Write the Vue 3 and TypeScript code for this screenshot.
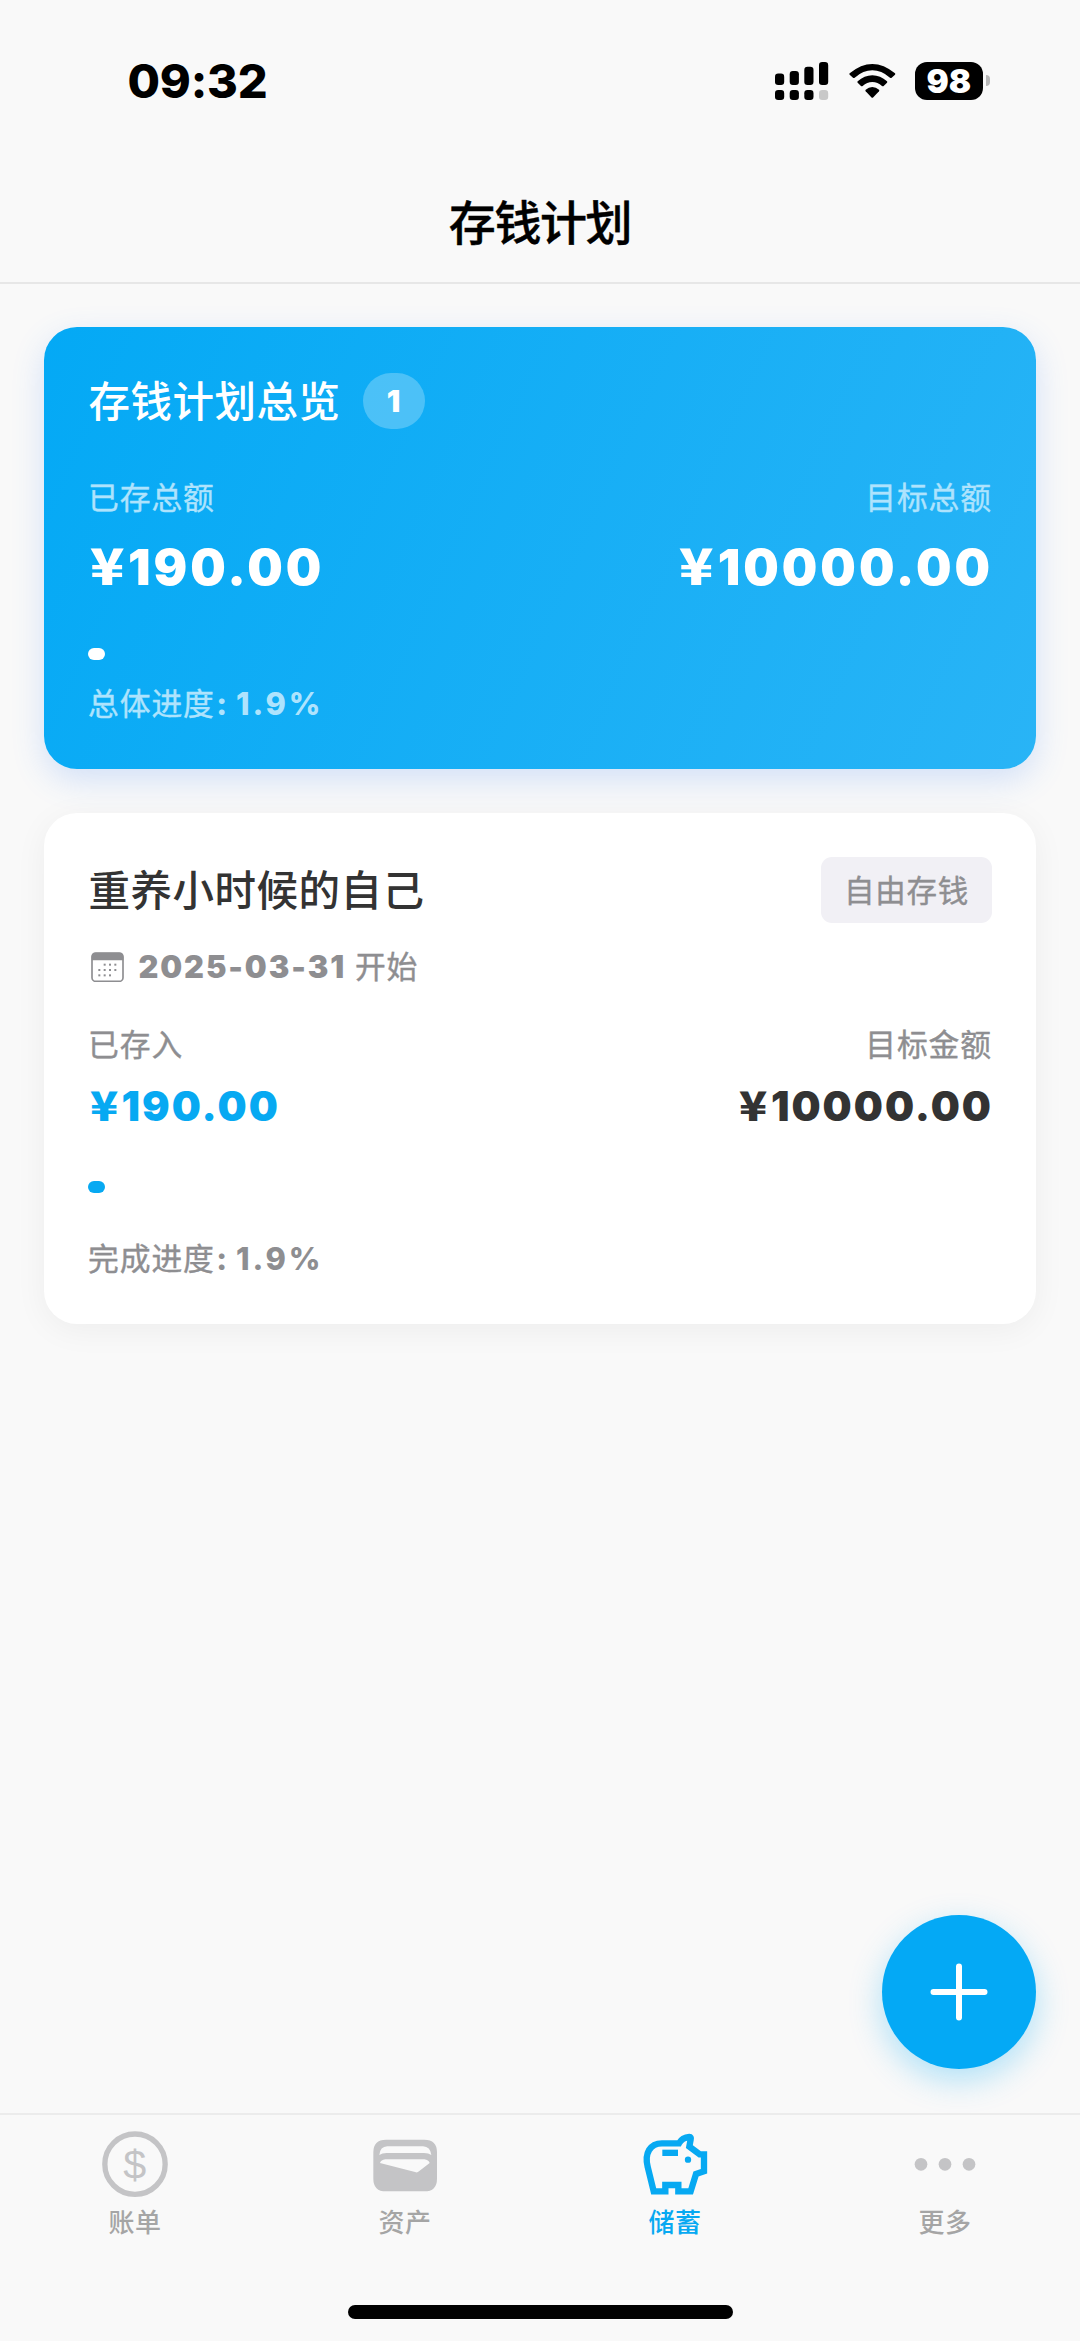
<script setup lang="ts">
interface Plan {
  name: string
  mode: string
  start: string
  saved: number
  target: number
}

const plans: Plan[] = [
  { name: '重养小时候的自己', mode: '自由存钱', start: '2025-03-31', saved: 190, target: 10000 },
]

const tabs = [
  { key: 'bill', label: '账单' },
  { key: 'asset', label: '资产' },
  { key: 'saving', label: '储蓄' },
  { key: 'more', label: '更多' },
]
const activeTab = 'saving'

const totalSaved = plans.reduce((sum, p) => sum + p.saved, 0)
const totalTarget = plans.reduce((sum, p) => sum + p.target, 0)

const amount = (n: number) => n.toFixed(2)
const percent = (a: number, b: number) => ((a / b) * 100).toFixed(1) + '%'
</script>

<template>
  <div class="screen">
    <header class="top">
      <div class="status">
        <span class="clock">09:32</span>
        <div class="indicators">
          <svg class="signal" viewBox="0 0 54 38" width="54" height="38">
            <rect x="0" y="11.6" width="9.2" height="11.4" rx="3.2" />
            <rect x="14.7" y="9" width="9.2" height="14" rx="3.2" />
            <rect x="29.3" y="4.8" width="9.2" height="18.2" rx="3.2" />
            <rect x="44" y="0" width="9.2" height="23" rx="3.2" />
            <rect x="0" y="28" width="9.2" height="10" rx="3.2" />
            <rect x="14.7" y="28" width="9.2" height="10" rx="3.2" />
            <rect x="29.3" y="28" width="9.2" height="10" rx="3.2" />
            <rect x="44" y="28" width="9.2" height="10" rx="3.2" fill="#c8c8c8" />
          </svg>
          <svg class="wifi" viewBox="295 66 141 108" width="47" height="36">
            <path d="M297 97Q331 69 365 69T433 97Q435 99 433 101L423 110Q421 112 418 110Q392 88 365 88T312 110Q309 112 307 110L297 101Q295 99 297 97Z" />
            <path d="M321 121Q341 103 365 103T409 121Q411 123 409 125L399 135Q397 137 394 135Q381 123 365 123T336 135Q333 137 331 135L321 125Q319 123 321 121Z" />
            <path d="M345 146Q354 138 365 138T385 146Q387 148 385 151L368 169Q365 172 362 169L345 151Q343 148 345 146Z" />
          </svg>
          <div class="battery"><span class="level">98</span></div>
          <span class="nub"></span>
        </div>
      </div>
      <h1 class="nav-title">存钱计划</h1>
    </header>

    <main class="content">
      <section class="card overview">
        <div class="head">
          <h2 class="title">存钱计划总览</h2>
          <span class="count">{{ plans.length }}</span>
        </div>
        <div class="pair labels">
          <span>已存总额</span><span>目标总额</span>
        </div>
        <div class="pair sums">
          <span><i class="yen">¥</i>{{ amount(totalSaved) }}</span>
          <span class="goal"><i class="yen">¥</i>{{ amount(totalTarget) }}</span>
        </div>
        <div class="track"><div class="fill" :style="{ width: percent(totalSaved, totalTarget) }"></div></div>
        <p class="progress">总体进度<b>: {{ percent(totalSaved, totalTarget) }}</b></p>
      </section>

      <section v-for="p in plans" :key="p.name" class="card plan">
        <div class="head">
          <h2 class="title">{{ p.name }}</h2>
          <span class="tag">{{ p.mode }}</span>
        </div>
        <div class="date">
          <svg viewBox="182 1053 99 92" width="33" height="30.7">
            <rect x="185" y="1056" width="93" height="85" rx="11" fill="none" stroke="#8e8e91" stroke-width="5" />
            <path d="M184 1078V1068Q184 1055 197 1055H266Q279 1055 279 1068V1078Z" fill="#8e8e91" />
            <g fill="#8e8e91">
              <rect x="220" y="1088" width="6" height="6" /><rect x="236" y="1088" width="6" height="6" /><rect x="252" y="1088" width="6" height="6" />
              <rect x="204" y="1104" width="6" height="6" /><rect x="220" y="1104" width="6" height="6" /><rect x="236" y="1104" width="6" height="6" /><rect x="252" y="1104" width="6" height="6" />
              <rect x="204" y="1120" width="6" height="6" /><rect x="220" y="1120" width="6" height="6" /><rect x="236" y="1120" width="6" height="6" />
            </g>
          </svg>
          <b>{{ p.start }}</b><span>开始</span>
        </div>
        <div class="pair labels">
          <span>已存入</span><span>目标金额</span>
        </div>
        <div class="pair sums">
          <span class="saved"><i class="yen">¥</i>{{ amount(p.saved) }}</span>
          <span class="goal"><i class="yen">¥</i>{{ amount(p.target) }}</span>
        </div>
        <div class="track"><div class="fill" :style="{ width: percent(p.saved, p.target) }"></div></div>
        <p class="progress">完成进度<b>: {{ percent(p.saved, p.target) }}</b></p>
      </section>
    </main>

    <button class="fab" aria-label="add">
      <svg viewBox="0 0 60 60" width="60" height="60">
        <path d="M30 4.5V55.5M4.5 30H55.5" stroke="#fff" stroke-width="6" stroke-linecap="round" />
      </svg>
    </button>

    <nav class="tabs">
      <div v-for="t in tabs" :key="t.key" class="tab" :class="{ active: t.key === activeTab }">
        <svg v-if="t.key === 'bill'" viewBox="117 82 216 216">
          <circle cx="225" cy="190.500" r="90.500" fill="none" stroke="#c4c4c6" stroke-width="16" />
          <text x="224" y="236" text-anchor="middle" class="dollar">$</text>
        </svg>
        <svg v-else-if="t.key === 'asset'" viewBox="927 82 216 216">
          <path
            fill="#c4c4c6" fill-rule="evenodd"
            d="M978 117H1093Q1131 117 1131 155V234Q1131 272 1093 272H978Q940 272 940 234V155Q940 117 978 117ZM982 137Q960 138 958 163Q966 157 980 157H1092Q1106 157 1114 163Q1111 138 1089 137ZM976 176Q963 178 960 187L1068 215Q1073 216 1077 212L1109 187Q1106 178 1093 176Z"
          />
        </svg>
        <svg v-else-if="t.key === 'saving'" viewBox="117 82 216 216">
          <path
            fill="none" stroke="#07a9f2" stroke-width="19"
            d="M161 272L143 198C133 158 150 128 186 128H237Q247 110 268 109Q274 109 272 116L268 138L299 161H312V212L288 220L272 272H235V253H196V272Z"
          />
          <rect x="187" y="147" width="47" height="19" fill="#07a9f2" />
          <circle cx="264" cy="177" r="9.500" fill="#07a9f2" />
        </svg>
        <svg v-else viewBox="927 82 216 216" fill="#c4c4c6">
          <circle cx="963" cy="191" r="19" /><circle cx="1035" cy="191" r="19" /><circle cx="1107" cy="191" r="19" />
        </svg>
        <span class="tab-label">{{ t.label }}</span>
      </div>
      <div class="home"></div>
    </nav>
  </div>
</template>

<style>
body {
  margin: 0;
  background: #f9f9f9;
}
</style>

<style scoped>
.screen {
  position: relative;
  display: flex;
  flex-direction: column;
  width: 1080px;
  height: 2341px;
  overflow: hidden;
  background: #f9f9f9;
  color: #333;
  font-family: Inter, "Noto Sans CJK SC", sans-serif;
}

.top {
  box-sizing: border-box;
  height: 284px;
  border-bottom: 2px solid #e7e7e7;
}

.status {
  display: flex;
  justify-content: space-between;
  height: 161px;
  padding: 0 90px 0 127.5px;
  align-items: center;
  box-sizing: border-box;
}

.clock {
  font-size: 47px;
  line-height: 60px;
  font-weight: 800;
  letter-spacing: -0.2px;
  color: #000;
}

.indicators {
  display: flex;
  align-items: center;
}

.wifi {
  margin: 0 19px 0 20px;
}

.battery {
  display: flex;
  align-items: center;
  justify-content: center;
  width: 68.5px;
  height: 38px;
  border-radius: 12px;
  background: #000;
}

.level {
  color: #fff;
  font-size: 33px;
  line-height: 38px;
  font-weight: 900;
}

.nub {
  width: 4px;
  height: 11px;
  margin-left: 3px;
  border-radius: 0 4px 4px 0;
  background: #b8b8b8;
}

.nav-title {
  margin: 32px 0 0;
  text-align: center;
  font-size: 47px;
  line-height: 60px;
  font-weight: 500;
  letter-spacing: -1.4px;
  color: #000;
  -webkit-text-stroke: 0.4px #000;
}

.content {
  display: flex;
  flex-direction: column;
  gap: 44px;
  padding: 43px 44px 0;
}

.card {
  box-sizing: border-box;
  padding: 0 44px;
  border-radius: 33px;
}

.overview {
  height: 442px;
  padding-top: 46px;
  color: #fff;
  background: linear-gradient(114deg, #04a9f5, #29b4f6);
  box-shadow: 0 11px 33px rgba(60, 130, 246, 0.2);
}

.plan {
  height: 511px;
  padding-top: 44px;
  background: #fff;
  box-shadow: 0 6px 33px rgba(0, 0, 0, 0.05);
}

.head {
  display: flex;
  align-items: center;
  height: 56px;
}

.plan .head {
  height: 66px;
  justify-content: space-between;
}

.title {
  margin: 1px 0 0 0.5px;
  font-size: 41.5px;
  line-height: 56px;
  font-weight: 500;
  letter-spacing: 0.5px;
}

.count {
  width: 62px;
  height: 56px;
  margin-left: 22px;
  border-radius: 28px;
  background: rgba(255, 255, 255, 0.25);
  text-align: center;
  font-size: 30px;
  line-height: 56px;
  font-weight: 900;
}

.tag {
  width: 171px;
  height: 66px;
  border-radius: 11px;
  background: #f1f0f5;
  color: #8e8e91;
  text-align: center;
  font-size: 30.5px;
  line-height: 68px;
  letter-spacing: 0.7px;
  -webkit-text-stroke: 0.4px #8e8e91;
}

.pair {
  display: flex;
  justify-content: space-between;
}

.labels {
  height: 44px;
  margin-top: 47px;
  font-size: 30.8px;
  line-height: 44px;
  letter-spacing: 0.9px;
  -webkit-text-stroke: 0.4px currentColor;
}

.overview .labels,
.overview .progress {
  color: #aee3fd;
}

.plan .labels {
  margin-top: 34px;
  color: #8e8e91;
}

.sums {
  height: 60px;
  margin-top: 17px;
  font-size: 50px;
  line-height: 60px;
  font-weight: 900;
  letter-spacing: 3px;
}

.plan .sums {
  height: 50px;
  margin-top: 14px;
  font-size: 41px;
  line-height: 50px;
  letter-spacing: 2px;
}

.goal {
  margin-right: -1px;
}

.yen {
  display: inline-block;
  margin: 0 5px 0 1.5px;
  font-family: "Noto Sans CJK SC", sans-serif;
  font-style: normal;
  line-height: 1;
  transform: scaleX(1.13);
  transform-origin: left;
}

.saved {
  color: #07a9f2;
}

.track {
  height: 12px;
  margin-top: 51px;
}

.plan .track {
  margin-top: 50px;
}

.fill {
  height: 12px;
  border-radius: 6px;
  background: #fff;
}

.plan .fill {
  background: #07a9f2;
}

.progress {
  margin: 22px 0 0;
  font-size: 30.8px;
  line-height: 44px;
  letter-spacing: 0.9px;
  white-space: pre;
  -webkit-text-stroke: 0.4px currentColor;
}

.plan .progress {
  margin-top: 44px;
  color: #8e8e91;
}

.progress b {
  margin-left: 1.5px;
  font-weight: 800;
  letter-spacing: 2.8px;
  word-spacing: -3.5px;
  -webkit-text-stroke: 0;
}

.date {
  display: flex;
  align-items: center;
  height: 44px;
  margin-top: 22px;
  padding-left: 2.500px;
  color: #8e8e91;
  font-size: 30.8px;
  line-height: 44px;
}

.date b {
  margin-left: 15px;
  font-weight: 900;
  letter-spacing: 1.9px;
}

.date span {
  margin-left: 9px;
  letter-spacing: 0.7px;
  -webkit-text-stroke: 0.4px #8e8e91;
}

.fab {
  position: absolute;
  right: 44px;
  top: 1915px;
  display: flex;
  align-items: center;
  justify-content: center;
  width: 154px;
  height: 154px;
  padding: 0;
  border: 0;
  border-radius: 50%;
  background: #04a9f5;
  box-shadow: 0 11px 33px rgba(4, 169, 245, 0.3);
}

.tabs {
  box-sizing: border-box;
  display: flex;
  flex-wrap: wrap;
  align-content: flex-start;
  justify-content: center;
  height: 228px;
  margin-top: auto;
  padding-top: 12.5px;
  border-top: 2px solid #ececec;
}

.tab {
  display: flex;
  flex-direction: column;
  align-items: center;
  width: 270px;
  height: 177.5px;
}

.tab svg {
  width: 72px;
  height: 72px;
}

.dollar {
  fill: #c4c4c6;
  font-family: "Liberation Sans", sans-serif;
  font-size: 124px;
}

.tab-label {
  margin-top: 5px;
  font-size: 26px;
  line-height: 36px;
  font-weight: 500;
  letter-spacing: 0.5px;
  color: #a5a5a5;
}

.active .tab-label {
  color: #07a9f2;
}

.home {
  width: 385px;
  height: 14px;
  border-radius: 7px;
  background: #000;
}
</style>
